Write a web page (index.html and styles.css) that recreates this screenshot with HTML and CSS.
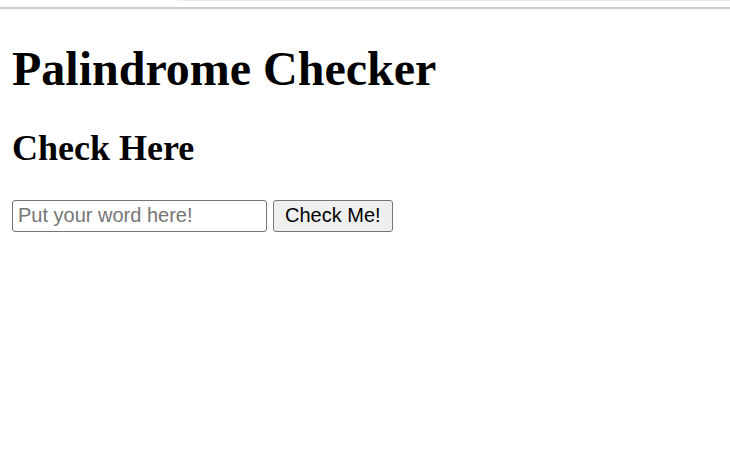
FILE: index.html
```html
<!DOCTYPE html>
<html>
<head>
<meta charset="utf-8">
<link rel="stylesheet" href="styles.css">
</head>
<body>
<div class="chrome"><div class="chrome-tab"></div></div>
<main class="page">
  <h1 class="title">Palindrome Checker</h1>
  <h2 class="subtitle">Check Here</h2>
  <form class="form">
    <input class="word" type="text" placeholder="Put your word here!">
    <button class="btn" type="button">Check Me!</button>
  </form>
</main>
</body>
</html>
```
FILE: styles.css
```css
html, body {
  margin: 0;
  padding: 0;
  background: #fff;
}
body {
  font-family: "Liberation Serif", "Times New Roman", serif;
  color: #000;
}
.chrome {
  height: 7px;
  border-bottom: 2px solid #cccccc;
}
.chrome-tab {
  margin-left: 177px;
  height: 1px;
  background: linear-gradient(to right, #f4f4f4, #e4e4e4 12px);
}
.page {
  padding: 0 12px;
  display: flow-root;
}
.title {
  font-size: 48px;
  font-weight: bold;
  margin: 32px 0;
  line-height: 1.15;
}
.subtitle {
  font-size: 36px;
  font-weight: bold;
  margin: 30px 0;
  line-height: 1.15;
}
.form {
  display: flex;
  gap: 6px;
  align-items: stretch;
}
.word {
  box-sizing: border-box;
  width: 255px;
  height: 32px;
  border: 1px solid #767676;
  border-radius: 3px;
  padding: 1px 5px;
  font-family: "Liberation Sans", Arial, sans-serif;
  font-size: 20px;
  color: #000;
  outline: none;
}
.word::placeholder {
  color: #757575;
}
.btn {
  box-sizing: border-box;
  height: 32px;
  padding: 0 11px;
  border: 1px solid #767676;
  border-radius: 3px;
  background: #efefef;
  font-family: "Liberation Sans", Arial, sans-serif;
  font-size: 20px;
  color: #000;
}
```
